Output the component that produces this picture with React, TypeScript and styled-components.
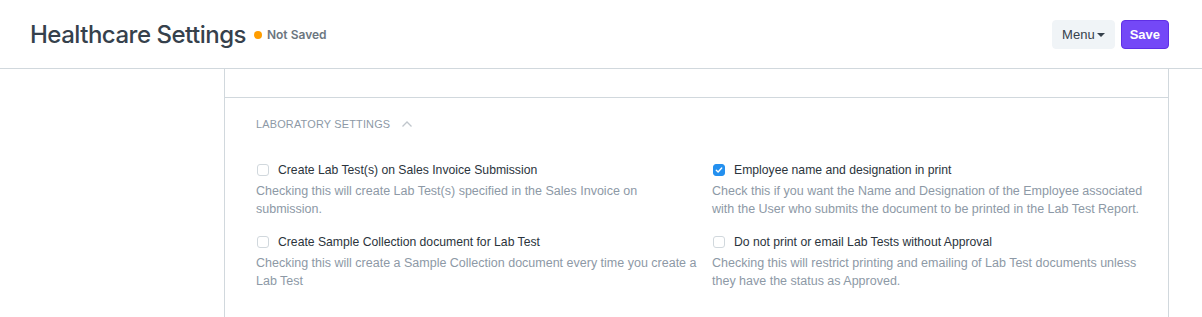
import { FC } from 'react';
import styled, { createGlobalStyle } from 'styled-components';

const GlobalStyle = createGlobalStyle`
    body {
        margin: 0;
        background: #ffffff;
        font-family: "Liberation Sans", Arial, sans-serif;
        color: #333c44;
        -webkit-font-smoothing: antialiased;
    }
`;

const Page = styled.div`
    width: 1202px;
    height: 317px;
    overflow: hidden;
    display: flex;
    flex-direction: column;
`;

const Header = styled.div`
    height: 69px;
    box-sizing: border-box;
    border-bottom: 1px solid #d1d8dd;
    display: flex;
    align-items: center;
    justify-content: space-between;
    padding: 0 33px 0 30px;
`;

const TitleBlock = styled.div`
    display: flex;
    align-items: center;
    gap: 8px;
`;

const Title = styled.h1`
    margin: 0;
    font-family: Inter, "Noto Sans", sans-serif;
    font-size: 24px;
    font-weight: 500;
    color: #36414c;
    letter-spacing: -0.5px;
`;

const Indicator = styled.span`
    display: flex;
    align-items: center;
    gap: 5px;
    font-family: Inter, "Noto Sans", sans-serif;
    font-size: 12px;
    font-weight: 600;
    color: #6c7680;
    margin-top: 1px;
    &::before {
        content: '';
        width: 8px;
        height: 8px;
        border-radius: 50%;
        background: #ff9d00;
    }
`;

const Actions = styled.div`
    display: flex;
    gap: 6px;
    margin-top: 1px;
`;

const Button = styled.button<{ $primary?: boolean }>`
    height: 29px;
    box-sizing: border-box;
    border-radius: 4px;
    font-family: inherit;
    font-size: 13px;
    font-weight: ${p => (p.$primary ? 700 : 400)};
    padding: 0 ${p => (p.$primary ? 8 : 9)}px;
    display: flex;
    align-items: center;
    gap: 2px;
    border: 1px solid ${p => (p.$primary ? '#5f2fe6' : '#f0f4f7')};
    background: ${p => (p.$primary ? '#7448f7' : '#f0f4f7')};
    color: ${p => (p.$primary ? '#ffffff' : '#36414c')};
`;

const Caret = styled.span`
    width: 0;
    height: 0;
    border-left: 4px solid transparent;
    border-right: 4px solid transparent;
    border-top: 4px solid #36414c;
`;

const Body = styled.div`
    flex: 1;
    display: flex;
    padding-left: 224px;
    padding-right: 33px;
`;

const Form = styled.div`
    flex: 1;
    border-left: 1px solid #d1d8dd;
    border-right: 1px solid #d1d8dd;
`;

const EmptySection = styled.div`
    height: 28px;
    border-bottom: 1px solid #d1d8dd;
`;

const Section = styled.div`
    padding: 17px 22px 0 31px;
`;

const SectionHead = styled.div`
    display: flex;
    align-items: center;
    gap: 11px;
    font-size: 10.9px;
    letter-spacing: 0.2px;
    color: #8d99a6;
    text-transform: uppercase;
    height: 18px;
`;

const Grid = styled.div`
    margin-top: 28px;
    display: grid;
    grid-template-columns: 443px 1fr;
    column-gap: 13px;
    row-gap: 15px;
`;

const Field = styled.div`
    display: flex;
    flex-direction: column;
`;

const CheckRow = styled.label`
    display: flex;
    align-items: center;
    gap: 9px;
    font-size: 12.2px;
    color: #2b343c;
    height: 18px;
`;

const Box = styled.span<{ $checked?: boolean }>`
    width: 12px;
    height: 12px;
    box-sizing: border-box;
    border-radius: 3px;
    margin-left: 1px;
    border: 1px solid ${p => (p.$checked ? '#2490ef' : '#d1d8dd')};
    background: ${p => (p.$checked ? '#2490ef' : '#ffffff')};
    display: flex;
    align-items: center;
    justify-content: center;
`;

const Help = styled.div`
    margin-top: 3px;
    font-size: 12.5px;
    line-height: 18px;
    color: #8d99a6;
`;

const fields = [
    {
        label: 'Create Lab Test(s) on Sales Invoice Submission',
        help: 'Checking this will create Lab Test(s) specified in the Sales Invoice on submission.',
        checked: false,
    },
    {
        label: 'Employee name and designation in print',
        help: 'Check this if you want the Name and Designation of the Employee associated with the User who submits the document to be printed in the Lab Test Report.',
        checked: true,
    },
    {
        label: 'Create Sample Collection document for Lab Test',
        help: 'Checking this will create a Sample Collection document every time you create a Lab Test',
        checked: false,
    },
    {
        label: 'Do not print or email Lab Tests without Approval',
        help: 'Checking this will restrict printing and emailing of Lab Test documents unless they have the status as Approved.',
        checked: false,
    },
];

const App: FC = () => {
    return (
        <Page>
            <GlobalStyle />
            <Header>
                <TitleBlock>
                    <Title>Healthcare Settings</Title>
                    <Indicator>Not Saved</Indicator>
                </TitleBlock>
                <Actions>
                    <Button>
                        Menu
                        <Caret />
                    </Button>
                    <Button $primary>Save</Button>
                </Actions>
            </Header>
            <Body>
                <Form>
                    <EmptySection />
                    <Section>
                        <SectionHead>
                            Laboratory Settings
                            <svg width="12" height="8" viewBox="0 0 12 8" fill="none">
                                <path d="M1.5 6.5L6 2l4.5 4.5" stroke="#c0c6cc" strokeWidth="1.3" />
                            </svg>
                        </SectionHead>
                        <Grid>
                            {fields.map(f => (
                                <Field key={f.label}>
                                    <CheckRow>
                                        <Box $checked={f.checked}>
                                            {f.checked && (
                                                <svg width="8" height="8" viewBox="0 0 8 8" fill="none">
                                                    <path d="M1.3 4.2l1.8 1.7 3.6-3.8" stroke="#fff" strokeWidth="1.4" strokeLinecap="round" strokeLinejoin="round" />
                                                </svg>
                                            )}
                                        </Box>
                                        {f.label}
                                    </CheckRow>
                                    <Help>{f.help}</Help>
                                </Field>
                            ))}
                        </Grid>
                    </Section>
                </Form>
            </Body>
        </Page>
    );
};

export default App;
